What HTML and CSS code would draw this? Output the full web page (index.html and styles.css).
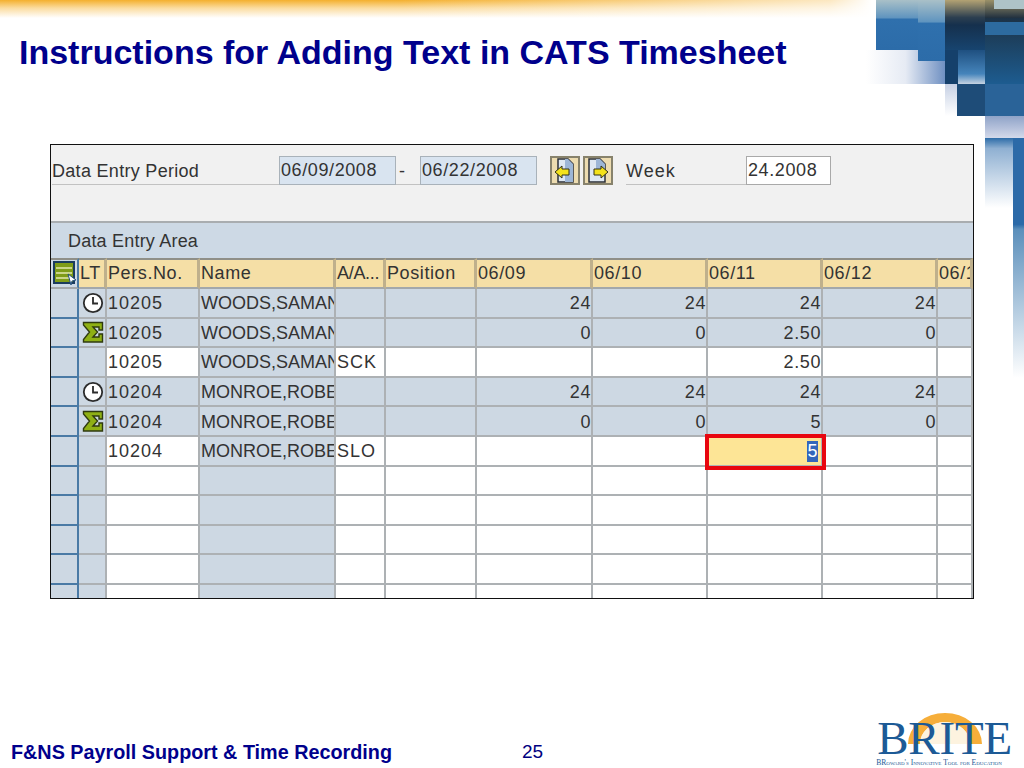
FILE: index.html
```html
<!DOCTYPE html>
<html lang="en">
<head>
  <meta charset="UTF-8">
  <title>Instructions for Adding Text in CATS Timesheet</title>
  <link rel="stylesheet" href="styles.css">
</head>
<body>
<svg class="icon-defs" width="0" height="0">
  <symbol id="clock" viewBox="0 0 22 22">
    <circle cx="11" cy="11" r="9.2" fill="#fff" stroke="#2b2b2b" stroke-width="1.8"/>
    <path d="M11 5v6.5h5" fill="none" stroke="#2b2b2b" stroke-width="1.8"/>
  </symbol>
  <symbol id="sigma" viewBox="0 0 22 22">
    <path d="M1.5 1.5h19v7.5h-3.5v-3h-6l4.5 5-4.5 5h6v-3h3.5v8h-19v-2.5l6-7.5-6-7z" fill="#8fb015" stroke="#2f3a10" stroke-width="1.4"/>
  </symbol>
</svg>

<div class="slide">
  <svg class="deco" width="180" height="380" viewBox="844 0 180 380">
    <defs>
      <linearGradient id="gA" x1="0" y1="0" x2="0" y2="1">
        <stop offset="0" stop-color="#a9c0c8"/><stop offset=".36" stop-color="#5f94bf"/><stop offset=".38" stop-color="#2f70ad"/><stop offset="1" stop-color="#2c6ca9"/>
      </linearGradient>
      <linearGradient id="gC" x1="0" y1="0" x2="0" y2="1">
        <stop offset="0" stop-color="#b3a273"/><stop offset=".35" stop-color="#2c3f50"/><stop offset=".5" stop-color="#15304d"/><stop offset="1" stop-color="#17446f"/>
      </linearGradient>
      <linearGradient id="gC2" x1="0" y1="0" x2="0" y2="1">
        <stop offset="0" stop-color="#1f5080"/><stop offset=".7" stop-color="#4584bb"/><stop offset="1" stop-color="#c6d3e2"/>
      </linearGradient>
      <linearGradient id="gD" x1="0" y1="0" x2="0" y2="1">
        <stop offset="0" stop-color="#1c2732"/><stop offset="1" stop-color="#1d5c90"/>
      </linearGradient>
      <linearGradient id="gTop" x1="0" y1="0" x2="0" y2="1">
        <stop offset="0" stop-color="#9a9068"/><stop offset="1" stop-color="#20303f"/>
      </linearGradient>
      <linearGradient id="gFade" x1="0" y1="0" x2="1" y2="0">
        <stop offset="0" stop-color="#fff"/><stop offset=".5" stop-color="#e6ebf4"/><stop offset="1" stop-color="#6f90c2"/>
      </linearGradient>
      <linearGradient id="gSmall" x1="0" y1="0" x2="0" y2="1">
        <stop offset="0" stop-color="#c6d0e4"/><stop offset="1" stop-color="#fff"/>
      </linearGradient>
      <linearGradient id="gLilac" x1="0" y1="0" x2="0" y2="1">
        <stop offset="0" stop-color="#8fa3c8"/><stop offset="1" stop-color="#d3d9ea"/>
      </linearGradient>
      <linearGradient id="gStripL" x1="0" y1="0" x2="0" y2="1">
        <stop offset="0" stop-color="#2d6ca8"/><stop offset=".15" stop-color="#8fb0d2"/><stop offset="1" stop-color="#fff"/>
      </linearGradient>
      <linearGradient id="gStripR" x1="0" y1="0" x2="0" y2="1">
        <stop offset="0" stop-color="#2c6aa8"/><stop offset=".36" stop-color="#2c6aa8"/><stop offset=".38" stop-color="#5b8fbb"/><stop offset="1" stop-color="#fff"/>
      </linearGradient>
    </defs>
    <rect x="866" y="50" width="79" height="34" fill="url(#gFade)"/>
    <rect x="876" y="0" width="42" height="50" fill="url(#gA)"/>
    <rect x="918" y="0" width="27" height="61" fill="url(#gA)"/>
    <rect x="945" y="0" width="40" height="50" fill="url(#gC)"/>
    <rect x="945" y="50" width="13" height="34" fill="#15406b"/>
    <rect x="958" y="50" width="27" height="34" fill="url(#gC2)"/>
    <rect x="985" y="0" width="39" height="84" fill="url(#gD)"/>
    <rect x="985" y="0" width="39" height="18" fill="url(#gTop)"/>
    <rect x="994" y="0" width="30" height="9" fill="#aec3c8"/>
    <rect x="985" y="22" width="39" height="13" fill="#2d6b9f"/>
    <rect x="945" y="84" width="12" height="32" fill="url(#gSmall)"/>
    <rect x="957" y="84" width="28" height="32" fill="#1e4c78"/>
    <rect x="985" y="84" width="39" height="32" fill="#2a6398"/>
    <rect x="985" y="116" width="39" height="22" fill="url(#gLilac)"/>
    <rect x="985" y="138" width="28" height="70" fill="url(#gStripL)"/>
    <rect x="1013" y="138" width="11" height="240" fill="url(#gStripR)"/>
  </svg>

  <header class="title-area">
    <h1>Instructions for Adding Text in CATS Timesheet</h1>
  </header>

  <main class="sap-frame">
    <div class="period-row">
      <span class="lbl lbl-period">Data Entry Period</span>
      <span class="field">06/09/2008</span>
      <span class="lbl lbl-dash">-</span>
      <span class="field">06/22/2008</span>
      <span class="nav-btns">
        <span class="nav-btn">
          <svg width="26" height="25" viewBox="0 0 26 25"><path d="M6 1h10l5 5v18H6z" fill="#dfe8f2" stroke="#2b2f38" stroke-width="1.5"/><path d="M13 1h3l5 5v18h-8z" fill="#9db6d6"/><path d="M3 14l7-6v3h7v6h-7v3z" fill="#f4e21a" stroke="#30301a"/></svg>
        </span>
        <span class="nav-btn">
          <svg width="26" height="25" viewBox="0 0 26 25"><path d="M4 1h11l5 5v18H4z" fill="#dfe8f2" stroke="#2b2f38" stroke-width="1.5"/><path d="M11 1h4l5 5v6H11z" fill="#9db6d6"/><path d="M23 14l-7-6v3H9v6h7v3z" fill="#f4e21a" stroke="#30301a"/></svg>
        </span>
      </span>
      <span class="lbl lbl-week">Week</span>
      <span class="field field-white">24.2008</span>
    </div>

    <div class="area-title">Data Entry Area</div>

    <table class="grid">
      <colgroup>
        <col class="c-sel"><col class="c-lt"><col class="c-pers"><col class="c-name"><col class="c-aa"><col class="c-pos">
        <col class="c-first"><col class="c-day"><col class="c-day"><col class="c-day"><col class="c-last">
      </colgroup>
      <thead>
        <tr>
          <th class="sel-head">
            <svg width="24" height="25" viewBox="0 0 24 25"><rect x="1" y="1" width="20" height="21" fill="#7f9c18" stroke="#1b3c5e" stroke-width="2"/><path d="M3 7h16M3 12h16M3 17h16" stroke="#e3e8b0" stroke-width="1.6"/><path d="M15 13l8 6-4 1-1 4z" fill="#fff" stroke="#24507c"/></svg>
          </th>
          <th>LT</th><th>Pers.No.</th><th>Name</th><th class="tight">A/A...</th><th>Position</th>
          <th>06/09</th><th>06/10</th><th>06/11</th><th>06/12</th><th>06/13</th>
        </tr>
      </thead>
      <tbody>
        <tr class="sum">
          <td class="sel"></td><td class="lt"><svg class="ico"><use href="#clock"/></svg></td><td class="pers">10205</td><td class="name">WOODS,SAMAN</td><td class="code"></td><td></td>
          <td class="num">24</td><td class="num">24</td><td class="num">24</td><td class="num">24</td><td></td>
        </tr>
        <tr class="sum">
          <td class="sel"></td><td class="lt"><svg class="ico"><use href="#sigma"/></svg></td><td class="pers">10205</td><td class="name">WOODS,SAMAN</td><td class="code"></td><td></td>
          <td class="num">0</td><td class="num">0</td><td class="num">2.50</td><td class="num">0</td><td></td>
        </tr>
        <tr>
          <td class="sel"></td><td class="lt"></td><td class="pers">10205</td><td class="name">WOODS,SAMAN</td><td class="code">SCK</td><td></td>
          <td></td><td></td><td class="num">2.50</td><td></td><td></td>
        </tr>
        <tr class="sum">
          <td class="sel"></td><td class="lt"><svg class="ico"><use href="#clock"/></svg></td><td class="pers">10204</td><td class="name">MONROE,ROBE</td><td class="code"></td><td></td>
          <td class="num">24</td><td class="num">24</td><td class="num">24</td><td class="num">24</td><td></td>
        </tr>
        <tr class="sum">
          <td class="sel"></td><td class="lt"><svg class="ico"><use href="#sigma"/></svg></td><td class="pers">10204</td><td class="name">MONROE,ROBE</td><td class="code"></td><td></td>
          <td class="num">0</td><td class="num">0</td><td class="num">5</td><td class="num">0</td><td></td>
        </tr>
        <tr>
          <td class="sel"></td><td class="lt"></td><td class="pers">10204</td><td class="name">MONROE,ROBE</td><td class="code">SLO</td><td></td>
          <td></td><td></td><td class="num active"><span class="picked">5</span></td><td></td><td></td>
        </tr>
        <tr><td class="sel"></td><td class="lt"></td><td></td><td class="name"></td><td></td><td></td><td></td><td></td><td></td><td></td><td></td></tr>
        <tr><td class="sel"></td><td class="lt"></td><td></td><td class="name"></td><td></td><td></td><td></td><td></td><td></td><td></td><td></td></tr>
        <tr><td class="sel"></td><td class="lt"></td><td></td><td class="name"></td><td></td><td></td><td></td><td></td><td></td><td></td><td></td></tr>
        <tr><td class="sel"></td><td class="lt"></td><td></td><td class="name"></td><td></td><td></td><td></td><td></td><td></td><td></td><td></td></tr>
        <tr><td class="sel"></td><td class="lt"></td><td></td><td class="name"></td><td></td><td></td><td></td><td></td><td></td><td></td><td></td></tr>
      </tbody>
    </table>
  </main>

  <footer class="foot">
    <span class="foot-name">F&amp;NS Payroll Support &amp; Time Recording</span>
    <span class="foot-page">25</span>
    <div class="logo">
      <svg class="logo-arc" width="90" height="36" viewBox="0 0 90 36"><path d="M8 36a37 31 0 0 1 74 0h-12a25 22 0 0 0-50 0z" fill="#f6ae3a"/><path d="M20 36a25 22 0 0 1 50 0z" fill="#fdf3df"/></svg>
      <div class="logo-word">BRITE</div>
      <div class="logo-tag">BRoward's Innovative Tool for Education</div>
    </div>
  </footer>
</div>
</body>
</html>
```

FILE: styles.css
```css
body {
  margin: 0;
  font-family: "Liberation Sans", Arial, sans-serif;
  background: #fff;
  overflow: hidden;
}

.icon-defs {
  position: absolute;
}

.slide {
  position: relative;
  width: 1024px;
  height: 768px;
  display: flex;
  flex-direction: column;
  overflow: hidden;
  background:
    linear-gradient(to right, rgba(255,255,255,0) 400px, rgba(255,255,255,.7) 830px, #fff 872px) 0 0 / 100% 18px no-repeat,
    linear-gradient(to bottom, #f4b02e, #fbdca0 45%, #fff) 0 0 / 100% 18px no-repeat,
    #fff;
}

/* corner artwork sits behind everything */
.deco {
  position: absolute;
  top: 0;
  right: 0;
}

.title-area {
  position: relative;
  height: 144px;
  padding-left: 19px;
}

h1 {
  margin: 0;
  padding-top: 34px;
  font-size: 34px;
  line-height: 37px;
  font-weight: bold;
  color: #00008c;
}

/* SAP window */
.sap-frame {
  position: relative;
  width: 922px;
  height: 453px;
  margin-left: 50px;
  border: 1px solid #111;
  background: #f1f1f1;
  overflow: hidden;
  color: #333;
  font-size: 18px;
  letter-spacing: .6px;
}

.period-row {
  height: 76px;
  box-sizing: border-box;
  padding: 11px 0 0 1px;
  display: flex;
  align-items: flex-start;
}

.lbl {
  height: 29px;
  line-height: 30px;
  box-sizing: border-box;
  border-bottom: 1px solid #c2c2c2;
}

.lbl-period { width: 227px; letter-spacing: .3px; }
.lbl-dash { width: 24px; padding-left: 3px; }
.lbl-week { width: 120px; letter-spacing: 1px; }

.field {
  width: 117px;
  height: 29px;
  box-sizing: border-box;
  line-height: 27px;
  padding-left: 1px;
  background: #d9e4f0;
  border: 1px solid #a9b2ba;
}

.field-white {
  width: 85px;
  background: #fff;
  border: 1px solid #a9a9a9;
}

.nav-btns {
  display: flex;
  gap: 3px;
  margin: 0 13px;
}

.nav-btn {
  width: 30px;
  height: 29px;
  box-sizing: border-box;
  display: flex;
  align-items: center;
  justify-content: center;
  background: #eddcb0;
  border: 2px solid #87826c;
}

.area-title {
  height: 37px;
  box-sizing: border-box;
  border-top: 2px solid #a9adb0;
  padding-left: 17px;
  line-height: 36px;
  letter-spacing: .2px;
  background: #cdd9e5;
}

/* grid */
.grid {
  table-layout: fixed;
  width: 922px;
  border-collapse: separate;
  border-spacing: 0;
  background: #fff;
}

.c-sel, .c-lt { width: 28px; }
.c-pers { width: 93px; }
.c-name { width: 136px; }
.c-aa { width: 50px; }
.c-pos { width: 91px; }
.c-first { width: 116px; }
.c-day { width: 115px; }
.c-last { width: 35px; }

th, td {
  box-sizing: border-box;
  padding: 0 1px;
  overflow: hidden;
  white-space: nowrap;
  text-align: left;
  font-weight: normal;
}

th {
  height: 31px;
  padding-bottom: 1px;
  background: #f5dfa6;
  border-top: 2px solid #8f8f88;
  border-bottom: 2px solid #a3a8ab;
  border-right: 3px solid #bfb08c;
}

.sel-head {
  padding: 0 0 0 2px;
  background: #cdd9e5;
  border-right: 2px solid #4a7aa5;
}

.sel-head svg { display: block; }
.tight { letter-spacing: -.3px; }

td {
  height: 29.6px;
  padding-top: 2px;
  border-right: 2px solid #adb1b4;
  border-bottom: 2px solid #adb1b4;
}

.sum td { background: #cdd8e3; }

td.sel {
  background: #cdd8e3;
  border-right-color: #4a7aa5;
  border-bottom-color: #4a7aa5;
}

td.lt, td.name { background: #cdd8e3; }
td.name { letter-spacing: 0; }
td.pers { letter-spacing: 1px; }
td.code { letter-spacing: 1px; }

td.lt { padding: 0 0 0 3px; }

.ico {
  display: block;
  width: 22px;
  height: 22px;
}

td.num { text-align: right; padding-right: 0; }

td.active {
  background: #fde596;
  outline: 4px solid #e8060f;
  outline-offset: -1px;
  padding-right: 3px;
}

.picked {
  display: inline-block;
  background: #3366bb;
  color: #fff;
}

/* footer */
.foot {
  position: relative;
  flex: 1;
  display: flex;
  align-items: flex-end;
  color: #00008c;
  font-size: 19px;
  line-height: 22px;
}

.foot-name {
  width: 511px;
  padding: 0 0 5px 11px;
  font-weight: bold;
  font-size: 19.8px;
  white-space: nowrap;
}

.foot-page {
  padding-bottom: 5px;
  color: #000080;
}

.logo {
  position: relative;
  width: 136px;
  margin-left: 334px;
  height: 60px;
  color: #1c5a96;
  font-family: "Liberation Serif", "Times New Roman", serif;
}

/* sun rises behind the wordmark */
.logo-arc {
  position: absolute;
  left: 23px;
  top: 0;
}

.logo-word {
  position: relative;
  padding-top: 9px;
  font-size: 47px;
  line-height: 42px;
  letter-spacing: -.2px;
  white-space: nowrap;
}

.logo-tag {
  position: relative;
  font-size: 7.6px;
  line-height: 8px;
  font-variant: small-caps;
  white-space: nowrap;
  margin-left: -1px;
}
```
